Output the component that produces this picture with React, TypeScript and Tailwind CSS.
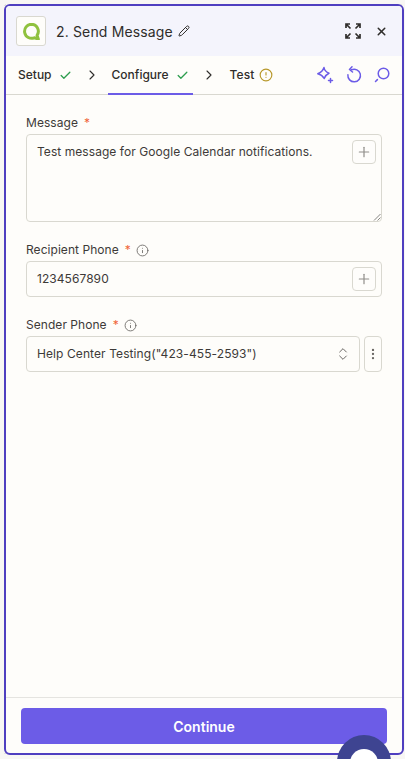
import { Check, ChevronRight, ChevronsUpDown, CircleAlert, EllipsisVertical, Info, Pencil, Plus, X } from 'lucide-react';

function Logo() {
  return (
    <svg viewBox="0 0 16 16" className="w-[17px] h-[17px]">
      <path d="M8 1.200a6.600 6.600 0 1 0 2.600 12.700l3.900 1.300-1.300-3.600A6.600 6.600 0 0 0 8 1.200Z" fill="none" stroke="#8fc13e" strokeWidth="2.800" strokeLinejoin="round" />
    </svg>
  );
}

function Sparkle() {
  return (
    <svg viewBox="0 0 18 18" className="w-[18px] h-[18px]" fill="none" stroke="#6c5ce7" strokeWidth="1.500" strokeLinejoin="round">
      <path d="M8 1.500c.4 2.400 2.400 4.700 5 5.800-2.300 1-3.900 2.700-4.800 5.200C7 10.400 4.800 8.400 1.800 7.800 4.500 6.600 7 4.500 8 1.500Z" />
      <path d="M14.500 12.500v4M12.500 14.500h4" strokeLinecap="round" />
    </svg>
  );
}

function UndoIcon() {
  return (
    <svg viewBox="0 0 16 18" className="w-4 h-[18px]" fill="none" stroke="#6c5ce7" strokeWidth="1.500" strokeLinecap="round" strokeLinejoin="round">
      <path d="M5.500 3.800a6.300 6.300 0 1 1-3.600 5" />
      <path d="M6 .8 3.500 3.500 6.500 6" />
    </svg>
  );
}

function MagnifierIcon() {
  return (
    <svg viewBox="0 0 16 16" className="w-4 h-4" fill="none" stroke="#6c5ce7" strokeWidth="1.500" strokeLinecap="round">
      <circle cx="9.500" cy="6.500" r="5.300" />
      <path d="M3.400 12.600 1.500 14.500" />
    </svg>
  );
}

function Label({ text, info }: { text: string; info?: boolean }) {
  return (
    <div className="flex items-center h-5 text-[12px] tracking-[0.05px] text-[#3d3a38]">
      <span>{text}</span>
      <span className="ml-1.5 text-[#f0653a]">*</span>
      {info && <Info className="ml-[5px] w-[13px] h-[13px] text-[#6b6865]" strokeWidth={1.600} />}
    </div>
  );
}

function PlusButton() {
  return (
    <button className="flex items-center justify-center w-6 h-6 rounded-[4px] border border-[#d9d8d0] bg-[#fefdfb] text-[#8f8e8a]">
      <Plus className="w-4 h-4" strokeWidth={1.800} />
    </button>
  );
}

export default function App() {
  return (
    <div className="relative h-[759px] w-[405px] overflow-hidden pt-1 pl-1 bg-[#f8f7f4] bg-[radial-gradient(#e4e3df_1px,transparent_1px)] bg-[size:11px_11px] font-['Inter',sans-serif]">
      <div className="flex flex-col h-[751px] w-[400px] rounded-md border-2 border-[#4f3fc0] bg-[#fefdfa] overflow-hidden">
        <div className="flex items-center h-[50px] shrink-0 pl-[10px] pr-[14px] bg-[#f4f4fc]">
          <div className="flex items-center justify-center w-[30px] h-[30px] rounded-[3px] border border-[#d9d8d0] bg-[#fefdfa]">
            <Logo />
          </div>
          <span className="ml-[10px] text-[14px] text-[#2f2d2b] tracking-[0.15px]">2. Send Message</span>
          <Pencil className="ml-[5px] w-3 h-3 text-[#2f2d2b]" strokeWidth={2} />
          <svg viewBox="0 0 16 16" className="ml-auto w-4 h-4" fill="none" stroke="#2f2d2b" strokeWidth="1.700">
            <path d="M1 5V1h4M11 1h4v4M1 11v4h4M15 11v4h-4M1.500 1.500l4 4M14.500 1.500l-4 4M1.500 14.500l4-4M14.500 14.500l-4-4" />
          </svg>
          <X className="ml-[14px] w-[13px] h-[13px] text-[#2f2d2b]" strokeWidth={2.800} />
        </div>

        <div className="flex items-center h-[39px] shrink-0 pl-3 pr-[12px] border-b border-[#d9d8d0] text-[12px] font-medium text-[#2f2d2b]">
          <span>Setup</span>
          <Check className="ml-[7px] w-[13px] h-[13px] text-[#2e9e4f]" strokeWidth={2.400} />
          <ChevronRight className="ml-[12px] w-4 h-4 text-[#2f2d2b]" strokeWidth={1.600} />
          <div className="relative flex items-center h-full ml-[8px] px-1">
            <span>Configure</span>
            <Check className="ml-[7px] w-[13px] h-[13px] text-[#2e9e4f]" strokeWidth={2.400} />
            <span className="absolute left-0 right-0 bottom-[-1px] h-0.5 bg-[#6c5ce7]" />
          </div>
          <ChevronRight className="ml-[8px] w-4 h-4 text-[#2f2d2b]" strokeWidth={1.600} />
          <span className="ml-[13px] tracking-[0.1px]">Test</span>
          <CircleAlert className="ml-[5px] w-[14px] h-[14px] text-[#b8982a]" strokeWidth={2} />
          <div className="ml-auto flex items-center gap-[12px]">
            <Sparkle />
            <UndoIcon />
            <MagnifierIcon />
          </div>
        </div>

        <div className="flex-1 flex flex-col px-5 pt-[18px]">
          <Label text="Message" />
          <div className="relative mt-[1px] h-[88px] rounded-[4px] border border-[#d9d8d0] pl-[10px] pt-[7px] text-[12px] leading-5 tracking-[0.06px] text-[#3d3a38]">
            Test message for Google Calendar notifications.
            <div className="absolute top-[5px] right-[5px]">
              <PlusButton />
            </div>
            <svg viewBox="0 0 8 8" className="absolute right-0 bottom-0 w-2 h-2" stroke="#6b6865" strokeWidth="0.800">
              <path d="M1 7.500 7.500 1M4.500 7.500l3-3" />
            </svg>
          </div>

          <div className="mt-[18px]">
            <Label text="Recipient Phone" info />
          </div>
          <div className="flex items-center justify-between mt-[1px] h-9 rounded-[4px] border border-[#d9d8d0] pl-[10px] pr-[5px] text-[12px] tracking-[0.06px] text-[#3d3a38]">
            <span>1234567890</span>
            <PlusButton />
          </div>

          <div className="mt-[18px]">
            <Label text="Sender Phone" info />
          </div>
          <div className="flex gap-1 mt-[1px] h-9">
            <div className="flex-1 flex items-center justify-between rounded-[4px] border border-[#d9d8d0] pl-[10px] pr-[8px] text-[12px] tracking-[0.09px] text-[#3d3a38]">
              <span>Help Center Testing("423-455-2593")</span>
              <ChevronsUpDown className="w-4 h-4 text-[#6b6865]" strokeWidth={1.500} />
            </div>
            <div className="flex items-center justify-center w-[18px] rounded-[4px] border border-[#d9d8d0] text-[#6b6865]">
              <EllipsisVertical className="w-[14px] h-[14px]" strokeWidth={2} />
            </div>
          </div>
        </div>

        <div className="shrink-0 h-[56px] border-t border-[#e5e4e0] px-[15px] pt-[10px]">
          <button className="w-full h-9 rounded-[4px] bg-[#6c5ce7] text-[14px] font-semibold text-white">Continue</button>
        </div>
      </div>

      <div className="absolute left-[337px] top-[735px] flex justify-center w-[54px] h-[54px] rounded-full bg-[#3e4491] pt-[14px]">
        <div className="w-7 h-7 rounded-full bg-white" />
      </div>
    </div>
  );
}
